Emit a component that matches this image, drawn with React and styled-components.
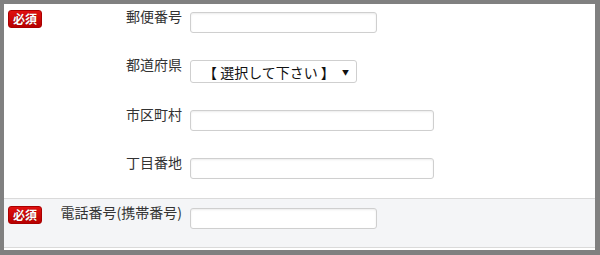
import React from "react";
import styled, { createGlobalStyle } from "styled-components";

const Global = createGlobalStyle`
  html, body { margin: 0; padding: 0; background: #808080; }
  body { font-family: "Noto Sans CJK JP", "Noto Sans", sans-serif; color: #333; }
  * { box-sizing: border-box; }
`;

const Frame = styled.div`
  width: 600px;
  height: 255px;
  padding: 4px 5px 5px 4px;
  background: #808080;
`;

const Panel = styled.div`
  height: 246px;
  background: #fff;
  padding-bottom: 2px;
  display: flex;
  flex-direction: column;
`;

const Section = styled.div`
  display: flex;
  flex-direction: column;
  gap: 27px;
  padding: ${(p) => p.$pad};
  background: ${(p) => (p.$alt ? "#f4f5f7" : "#fff")};
  border-top: ${(p) => (p.$alt ? "1px solid #dadada" : "none")};
  border-bottom: ${(p) => (p.$alt ? "1px solid #dadada" : "none")};
  flex: ${(p) => (p.$alt ? "1" : "none")};
`;

const Row = styled.div`
  display: grid;
  grid-template-columns: 178px 1fr;
  column-gap: 8px;
  align-items: start;
`;

const Head = styled.div`
  display: flex;
  justify-content: space-between;
  align-items: flex-start;
  padding-left: 4px;
`;

const Badge = styled.span`
  display: inline-flex;
  align-items: center;
  justify-content: center;
  width: 34px;
  height: 18px;
  margin-top: -2px;
  border-radius: 3px;
  border: 1px solid #a80000;
  background: linear-gradient(#e01010, #b80000);
  color: #fff;
  font-size: 12px;
  font-weight: bold;
  line-height: 1;
  text-shadow: 0 0 1px rgba(0, 0, 0, 0.4);
`;

const Spacer = styled.span``;

const Label = styled.label`
  font-size: 14px;
  line-height: 20px;
  margin-top: -6px;
  color: #333;
  white-space: nowrap;
`;

const Input = styled.input`
  display: block;
  width: ${(p) => p.$w}px;
  height: 21px;
  border: 1px solid #cfcfcf;
  border-radius: 3px;
  background: #fff;
  box-shadow: inset 0 1px 2px rgba(0, 0, 0, 0.08);
  padding: 0 4px;
  font: inherit;
  font-size: 13px;
`;

const Select = styled.div`
  width: 167px;
  height: 23px;
  border: 1px solid #cfcfcf;
  border-radius: 3px;
  background: #fff;
  display: flex;
  align-items: center;
  padding: 0 7px 0 12px;
  font-size: 14px;
  color: #111;
`;

const SelectText = styled.span`
  flex: 1;
  white-space: nowrap;
`;

const Arrow = styled.span`
  font-size: 7px;
  color: #111;
`;

const Field = ({ required, label, children }) => (
  <Row>
    <Head>
      {required ? <Badge>必須</Badge> : <Spacer />}
      <Label>{label}</Label>
    </Head>
    <div>{children}</div>
  </Row>
);

export default function App() {
  return (
    <>
      <Global />
      <Frame>
        <Panel>
          <Section $pad="8px 0 19px">
            <Field required label="郵便番号">
              <Input $w={187} />
            </Field>
            <Field label="都道府県">
              <Select>
                <SelectText>【 選択して下さい 】</SelectText>
                <Arrow>▼</Arrow>
              </Select>
            </Field>
            <Field label="市区町村">
              <Input $w={244} />
            </Field>
            <Field label="丁目番地">
              <Input $w={244} />
            </Field>
          </Section>
          <Section $alt $pad="9px 0 0">
            <Field required label="電話番号(携帯番号)">
              <Input $w={187} />
            </Field>
          </Section>
        </Panel>
      </Frame>
    </>
  );
}
